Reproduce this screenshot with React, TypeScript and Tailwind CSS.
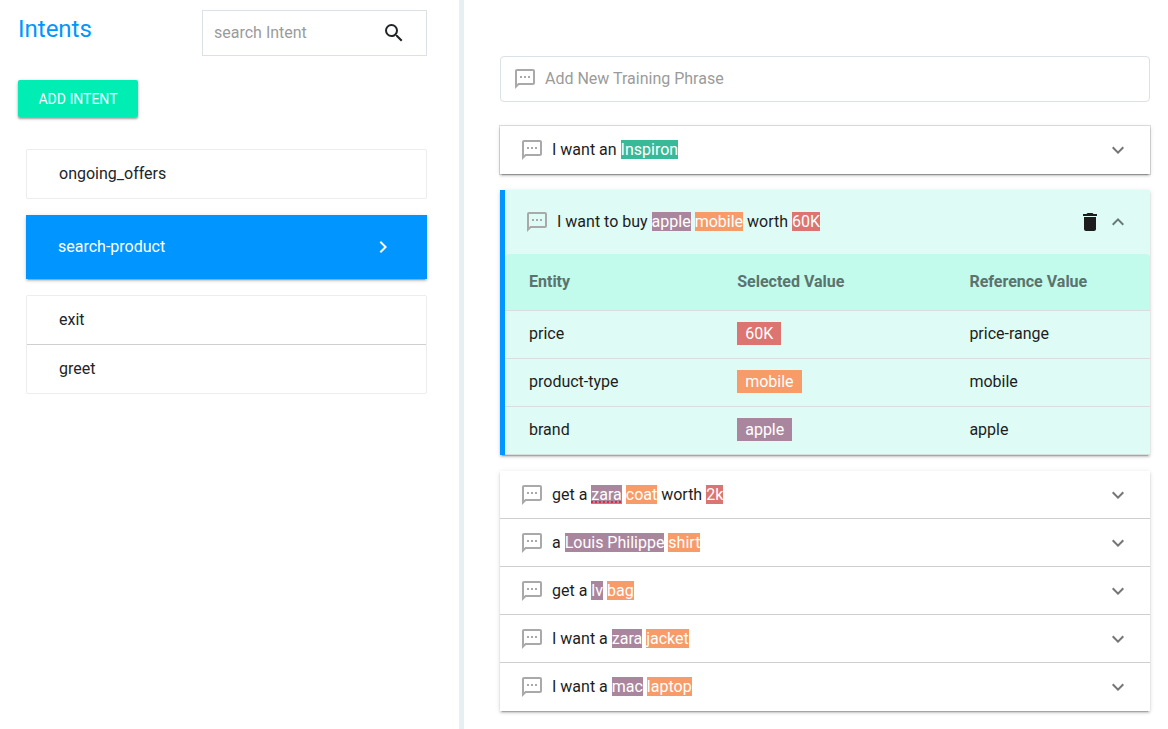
import React from "react";
import {
  MdChevronRight,
  MdDelete,
  MdExpandLess,
  MdExpandMore,
  MdOutlineSms,
  MdSearch,
} from "react-icons/md";

type Tone = "teal" | "plum" | "orange" | "red";
type Part = string | { text: string; tone: Tone; misspelled?: boolean };

const toneClass: Record<Tone, string> = {
  teal: "bg-[#38ba98]",
  plum: "bg-[#aa869e]",
  orange: "bg-[#f79b69]",
  red: "bg-[#dc7571]",
};

const entities: { name: string; value: string; tone: Tone; reference: string }[] = [
  { name: "price", value: "60K", tone: "red", reference: "price-range" },
  { name: "product-type", value: "mobile", tone: "orange", reference: "mobile" },
  { name: "brand", value: "apple", tone: "plum", reference: "apple" },
];

const phrases: Part[][] = [
  [
    "get a ",
    { text: "zara", tone: "plum", misspelled: true },
    " ",
    { text: "coat", tone: "orange" },
    " worth ",
    { text: "2k", tone: "red" },
  ],
  ["a ", { text: "Louis Philippe", tone: "plum" }, " ", { text: "shirt", tone: "orange" }],
  ["get a ", { text: "lv", tone: "plum" }, " ", { text: "bag", tone: "orange" }],
  ["I want a ", { text: "zara", tone: "plum" }, " ", { text: "jacket", tone: "orange" }],
  ["I want a ", { text: "mac", tone: "plum" }, " ", { text: "laptop", tone: "orange" }],
];

function Phrase({ parts }: { parts: Part[] }) {
  return (
    <p className="min-w-0 flex-1">
      {parts.map((part, i) =>
        typeof part === "string" ? (
          <React.Fragment key={i}>{part}</React.Fragment>
        ) : (
          <span key={i} className={`text-white ${toneClass[part.tone]}`}>
            {part.misspelled ? (
              <span className="underline decoration-[#f0213c] decoration-dotted decoration-2 underline-offset-2">
                {part.text}
              </span>
            ) : (
              part.text
            )}
          </span>
        ),
      )}
    </p>
  );
}

function PhraseRow({ parts }: { parts: Part[] }) {
  return (
    <li className="flex h-12 items-center gap-2 border-b border-[#cfcfcf] px-5 last:border-b-0">
      <MdOutlineSms className="size-6 shrink-0 text-[#a9a9a9]" />
      <Phrase parts={parts} />
      <button type="button" aria-label="Expand phrase" aria-expanded={false} className="text-[#757575]">
        <MdExpandMore className="size-6" />
      </button>
    </li>
  );
}

const panelShadow =
  "shadow-[0_3px_1px_-2px_rgba(0,0,0,0.2),0_2px_2px_0_rgba(0,0,0,0.14),0_1px_5px_0_rgba(0,0,0,0.12)]";
const outlinedShadow =
  "shadow-[0_0_0_1px_rgba(0,0,0,0.12),0_3px_1px_-2px_rgba(0,0,0,0.2),0_2px_2px_0_rgba(0,0,0,0.14),0_1px_5px_0_rgba(0,0,0,0.12)]";

function Sidebar() {
  return (
    <aside className="w-[464px] shrink-0 border-r-[5px] border-[#e6f0f3] pt-[10px] pr-8 pl-[18px]">
      <div className="flex items-start justify-between">
        <h1 className="pt-[3px] text-2xl leading-8 text-[#0095ff]">Intents</h1>
        <div className="flex h-[46px] w-[225px] items-center border border-[#dce1e5] pr-5 pl-[11px]">
          <input
            type="search"
            aria-label="search Intent"
            placeholder="search Intent"
            className="min-w-0 flex-1 bg-transparent outline-none placeholder:text-[#9b9b9b]"
          />
          <button type="button" aria-label="Search">
            <MdSearch className="size-6" />
          </button>
        </div>
      </div>
      <button
        type="button"
        className="mt-6 h-[37px] w-[120px] rounded-xs bg-[#00edb4] text-sm text-white shadow-[0_2px_2px_rgba(0,0,0,0.3),0_1px_4px_rgba(0,0,0,0.15)]"
      >
        ADD INTENT
      </button>
      <nav className="mt-8 ml-2 flex flex-col gap-4">
        <a href="#ongoing_offers" className="flex h-[50px] items-center rounded-xs border border-[#ededed] px-8">
          ongoing_offers
        </a>
        <a
          href="#search-product"
          aria-current="page"
          className={`flex h-16 items-center justify-between bg-[#0095ff] px-8 text-white ${panelShadow}`}
        >
          search-product
          <MdChevronRight className="size-6" />
        </a>
        <div className="divide-y divide-[#cfcfcf] rounded-xs border border-[#ededed]">
          <a href="#exit" className="flex h-[49px] items-center px-8">
            exit
          </a>
          <a href="#greet" className="flex h-12 items-center px-8">
            greet
          </a>
        </div>
      </nav>
    </aside>
  );
}

function ExpandedPhrase() {
  return (
    <section className={`border-l-[5px] border-[#0095ff] bg-[#defbf5] ${panelShadow}`}>
      <div className="flex h-16 items-center gap-2 px-5">
        <MdOutlineSms className="size-6 shrink-0 text-[#a9a9a9]" />
        <Phrase
          parts={[
            "I want to buy ",
            { text: "apple", tone: "plum" },
            " ",
            { text: "mobile", tone: "orange" },
            " worth ",
            { text: "60K", tone: "red" },
          ]}
        />
        <div className="flex gap-1">
          <button type="button" aria-label="Delete phrase">
            <MdDelete className="size-6" />
          </button>
          <button type="button" aria-label="Collapse phrase" aria-expanded={true} className="text-[#667a75]">
            <MdExpandLess className="size-6" />
          </button>
        </div>
      </div>
      <table className="w-full table-fixed border-separate border-spacing-0 text-left">
        <thead className="text-[#5a736d]">
          <tr className="h-[57px]">
            <th className="w-[36%] rounded-tl border-b border-[#d8dedd] bg-[#c2faec] pl-6">Entity</th>
            <th className="w-[36%] border-b border-[#d8dedd] bg-[#c2faec]">Selected Value</th>
            <th className="rounded-tr border-b border-[#d8dedd] bg-[#c2faec]">Reference Value</th>
          </tr>
        </thead>
        <tbody>
          {entities.map((entity) => (
            <tr key={entity.name} className="h-12">
              <td className="border-b border-[#d8dedd] pb-0.5 pl-6">{entity.name}</td>
              <td className="border-b border-[#d8dedd] pb-0.5">
                <span className={`px-2 py-0.5 text-white ${toneClass[entity.tone]}`}>{entity.value}</span>
              </td>
              <td className="border-b border-[#d8dedd] pb-0.5">{entity.reference}</td>
            </tr>
          ))}
        </tbody>
      </table>
    </section>
  );
}

export default function App() {
  return (
    <div className="flex min-h-screen bg-white font-[Roboto,sans-serif] text-base text-[#212529]">
      <Sidebar />
      <main className="min-w-0 flex-1 pt-14 pr-[18px] pb-4 pl-9">
        <div className="mb-6 flex h-[46px] items-center gap-2 rounded-sm border border-[#dce1e5] px-3">
          <MdOutlineSms className="size-6 shrink-0 text-[#a9a9a9]" />
          <input
            type="text"
            aria-label="Add New Training Phrase"
            placeholder="Add New Training Phrase"
            className="min-w-0 flex-1 bg-transparent outline-none placeholder:text-[#9b9b9b]"
          />
        </div>
        <div className="flex flex-col gap-4 text-[#1d1d1d]">
          <ul className={outlinedShadow}>
            <PhraseRow parts={["I want an ", { text: "Inspiron", tone: "teal" }]} />
          </ul>
          <ExpandedPhrase />
          <ul className={panelShadow}>
            {phrases.map((parts, i) => (
              <PhraseRow key={i} parts={parts} />
            ))}
          </ul>
        </div>
      </main>
    </div>
  );
}
